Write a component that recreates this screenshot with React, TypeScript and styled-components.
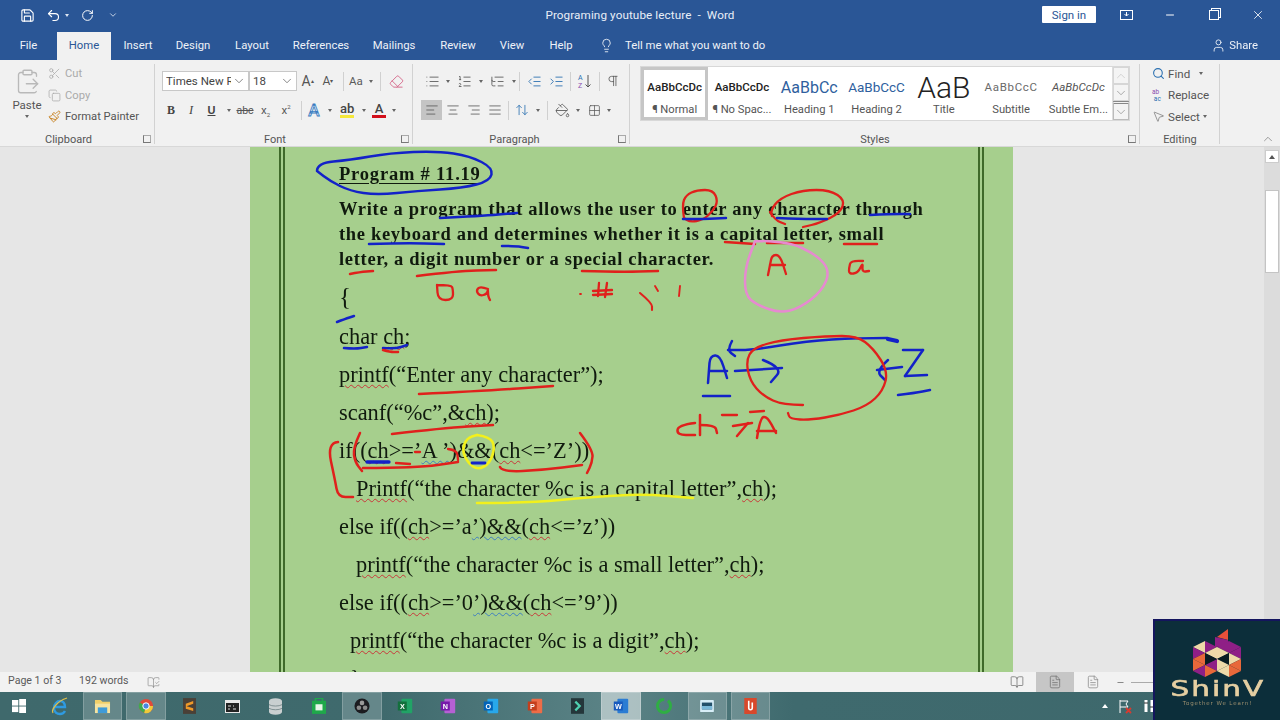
import React from "react";
import styled, { createGlobalStyle } from "styled-components";
import {
  Save, Undo2, RotateCw, Lightbulb, User, Scissors, Copy, Search, MousePointer2, ChevronDown, ChevronUp,
  AlignLeft, AlignCenter, AlignRight, AlignJustify, List, ListOrdered, ListTree, IndentDecrease, IndentIncrease,
  Pilcrow, Minus, X, Eraser, PaintBucket, Grid2x2, ArrowUpDown, BookOpen, FileText, BookOpenCheck, ClipboardPaste,
  Paintbrush,
} from "lucide-react";

const UI = `Roboto, "Liberation Sans", sans-serif`;

const Global = createGlobalStyle`
  html, body { margin: 0; padding: 0; background: #e6e6e6; }
  #root { width: 1280px; height: 720px; overflow: hidden; }
`;

const Screen = styled.div`
  position: relative; width: 1280px; height: 720px; overflow: hidden;
  display: flex; flex-direction: column; font-family: ${UI}; color: #444; filter: blur(0.4px);
`;
const TitleBar = styled.div`
  height: 32px; background: #2a5696; color: #fff; flex: none;
  display: grid; grid-template-columns: 1fr auto 1fr; align-items: center; font-size: 11.7px;
`;
const Qat = styled.div` display: flex; align-items: center; padding: 0 0 2px 15px; `;
const QatSlot = styled.span<{ $w: number }>`
  width: ${p => p.$w}px; display: flex; justify-content: center; align-items: center; flex: none;
`;
const Caret = styled.span<{ $c?: string }>`
  display: inline-block; flex: none; width: 0; height: 0; border-left: 2.5px solid transparent; border-right: 2.5px solid transparent;
  border-top: 3px solid ${p => p.$c || "#666"};
`;
const TitleText = styled.div` letter-spacing: 0.1px; color: #e8eef7; margin-bottom: 2px; white-space: pre; `;
const WinControls = styled.div` display: flex; align-items: center; justify-content: flex-end; margin-bottom: 3px; `;
const SignIn = styled.div`
  width: 54px; height: 17px; background: #fff; color: #2a5696; font-size: 11.5px; display: flex;
  align-items: center; justify-content: center; margin-right: 8px; border-radius: 1px;
`;
const WinBtn = styled.span`
  width: 44px; display: flex; justify-content: center; align-items: center;
`;
const Restore = styled.span`
  width: 8px; height: 8px; border: 1px solid #fff; position: relative;
  box-shadow: 2px -2px 0 -1px #2a5696, 2px -2px 0 0 #fff;
`;
const TabBar = styled.div`
  height: 28px; background: #2a5696; display: flex; align-items: stretch; flex: none; color: #eef2f8; font-size: 11.3px;
`;
const Tab = styled.div<{ $active?: boolean; $w: number }>`
  width: ${p => p.$w}px; display: flex; align-items: center; justify-content: center; flex: none; padding-bottom: 2px; box-sizing: border-box;
  background: ${p => (p.$active ? "#f1f1f1" : "transparent")};
  color: ${p => (p.$active ? "#2a5696" : "inherit")};
`;
const TellMe = styled.div` display: flex; align-items: center; gap: 11px; margin-left: 14px; padding-bottom: 2px; `;
const Share = styled.div` margin-left: auto; display: flex; align-items: center; gap: 3px; padding: 0 22px 2px 0; `;

const Ribbon = styled.div`
  height: 82px; flex: none; background: #f1f1f1; border-bottom: 1px solid #d8d8d8; display: flex; position: relative;
  padding-top: 4px; box-sizing: content-box; font-size: 11.5px;
`;
const Group = styled.div<{ $w: number }>`
  width: ${p => p.$w}px; height: 80px; flex: none; display: flex; flex-direction: column; box-sizing: border-box;
  border-right: 1px solid #d2d2d2;
`;
const GroupBody = styled.div`
  flex: 1; min-height: 0; padding: 7px 0 0 0; display: flex; flex-direction: column; gap: 9px;
`;
const GroupLabel = styled.div`
  height: 14px; margin-top: auto; flex: none; display: grid; grid-template-columns: 1fr auto 1fr; align-items: center; font-size: 11px; color: #555;
  padding: 4px 3px 0 0; box-sizing: content-box; margin-bottom: -2px;
`;
const Launcher = styled.span`
  grid-column: 3; justify-self: end; width: 6px; height: 6px; border-left: 1px solid #777; border-bottom: 1px solid #777; border-top: 1px solid #aaa; border-right: 1px solid #aaa;
`;
const LabelText = styled.span<{ $mr?: number; $ml?: number }>`
  grid-column: 2; margin-right: ${p => p.$mr ?? 14}px; margin-left: ${p => p.$ml ?? 0}px;
`;
const Row = styled.div<{ $left?: number }>`
  display: flex; align-items: center; height: 20px; padding-left: ${p => p.$left || 0}px;
`;
const Slot = styled.span<{ $w: number; $active?: boolean }>`
  width: ${p => p.$w}px; height: 20px; flex: none; display: flex; align-items: center; justify-content: center; color: #5a5a5a;
  background: ${p => (p.$active ? "#c4c4c4" : "transparent")}; font-size: 11.5px;
  & > svg { flex: none; }
`;
const Sep = styled.span` width: 1px; height: 19px; background: #d0d0d0; flex: none; `;
const Combo = styled.div<{ $w: number }>`
  width: ${p => p.$w}px; height: 20px; box-sizing: border-box; background: #fff; border: 1px solid #c8c8c8; flex: none;
  display: flex; align-items: center; justify-content: space-between; padding: 0 2px 0 3px; font-size: 11.5px; color: #444; overflow: hidden;
`;
const ComboText = styled.span<{ $w: number }>` width: ${p => p.$w}px; overflow: hidden; white-space: nowrap; `;
const BigA = styled.span<{ $s: number }>` font-size: ${p => p.$s}px; color: #555; line-height: 1; `;
const OutlineA = styled.span`
  font-size: 17px; line-height: 1; color: #dce9f6; font-weight: 500; -webkit-text-stroke: 0.8px #3a7cc0;
`;
const Sup = styled.sup` font-size: 6px; color: #555; line-height: 0; `;
const Sub = styled.sub` font-size: 6px; color: #555; line-height: 0; `;
const Bold = styled.b` font-family: "Liberation Serif", serif; font-size: 12px; color: #444; `;
const Ital = styled.i` font-family: "Liberation Serif", serif; font-size: 12.5px; color: #444; `;
const Under = styled.u` font-family: "Liberation Sans", sans-serif; font-size: 11px; font-weight: bold; color: #444; `;
const Strike = styled.s` font-size: 10.5px; color: #555; `;
const ColorA = styled.span<{ $bar: string }>`
  font-size: 13px; font-weight: 500; line-height: 13px; color: #444; border-bottom: 3px solid ${p => p.$bar}; width: 14px; text-align: center;
`;
const Clip = styled.div` display: flex; flex: 1; min-height: 0; `;
const PasteCol = styled.div`
  width: 48px; flex: none; padding: 4px 0 0 6px; display: flex; flex-direction: column; align-items: center; font-size: 11.5px; color: #555; gap: 3px; box-sizing: border-box;
`;
const ClipList = styled.div` display: flex; flex-direction: column; margin-top: -1px; `;
const ClipRow = styled.div<{ $muted?: boolean }>`
  height: 21.5px; display: flex; align-items: center; gap: 4px; white-space: nowrap; color: ${p => (p.$muted ? "#aaa" : "#555")}; font-size: 11.2px;
`;
const Gallery = styled.div`
  margin: 2px 0 0 10px; width: 490px; height: 55px; box-sizing: border-box; background: #fff; border: 1px solid #d8d8d8; display: flex; flex: none;
`;
const StyleItem = styled.div<{ $on?: boolean }>`
  width: 67.3px; flex: none; box-sizing: border-box; border: 3px solid ${p => (p.$on ? "#c6c6c6" : "transparent")};
  display: flex; flex-direction: column; align-items: center; overflow: hidden; white-space: nowrap;
`;
const Sample = styled.div<{ $s: number; $c?: string; $i?: boolean; $ls?: number; $w?: number }>`
  height: 30px; width: 61px; display: flex; align-items: center; justify-content: center; overflow: hidden; flex: none;
  font-size: ${p => p.$s}px; color: ${p => p.$c || "#222"}; font-style: ${p => (p.$i ? "italic" : "normal")};
  letter-spacing: ${p => p.$ls || 0}px; font-weight: ${p => p.$w || 400}; padding-top: 4px; box-sizing: border-box;
`;
const StyleName = styled.div` font-size: 11.2px; color: #555; height: 16px; line-height: 16px; margin-top: 2px; `;
const GalleryBtns = styled.div` width: 16px; flex: none; margin-left: auto; display: flex; flex-direction: column; border-left: 1px solid #ddd; background: #f4f4f4; `;
const GalleryBtn = styled.div<{ $bar?: boolean }>`
  flex: 1; border: 1px solid ${p => (p.$bar ? "#bbb" : "#d6d6d6")}; box-sizing: border-box; display: flex; align-items: center; justify-content: center; color: #8a8a8a;
  border-top: ${p => (p.$bar ? "3px double #888" : "1px solid #d6d6d6")};
`;
const EditList = styled.div` display: flex; flex-direction: column; padding-left: 12px; margin-top: -1px; `;
const EditRow = styled.div`
  height: 21.5px; display: flex; align-items: center; gap: 3px; color: #555; white-space: nowrap; font-size: 11.6px;
`;
const Collapse = styled.span` position: absolute; right: 5px; bottom: 0px; color: #777; display: flex; `;

const Main = styled.div` flex: 1; min-height: 0; display: flex; background: #e6e6e6; `;
const Page = styled.div`
  margin-left: 250px; width: 763px; flex: none; background: #a6cf8d; padding: 0 29px; box-sizing: border-box; overflow: hidden;
`;
const Frame = styled.div`
  height: 100%; box-sizing: border-box; border-left: 6px double #3f6a2a; border-right: 6px double #3f6a2a;
  padding: 12px 0 0 54px; font-family: "Liberation Serif", serif; color: #101a0e; overflow: hidden;
`;
const Heading = styled.div`
  height: 30px; line-height: 30px; font-weight: bold; font-size: 18.5px; letter-spacing: 0.8px; text-decoration: underline; text-underline-offset: 3px; white-space: nowrap;
`;
const Para = styled.div`
  margin-top: 8px; width: 600px; font-weight: bold; font-size: 18.5px; line-height: 25px; letter-spacing: 0.68px;
`;
const ParaLine = styled.div` white-space: nowrap; height: 25px; `;
const Brace = styled.div` margin-top: 6px; height: 38px; line-height: 38px; font-size: 25px; `;
const Code = styled.div<{ $indent?: number; $first?: boolean }>`
  height: 38px; line-height: 38px; font-size: 22.4px; white-space: nowrap; padding-left: ${p => p.$indent || 0}px;
  margin-top: ${p => (p.$first ? 2 : 0)}px;
`;
const Sq = styled.span<{ $blue?: boolean }>`
  text-decoration: underline wavy ${p => (p.$blue ? "#3f7fc0" : "#c8383a")} 1px; text-underline-offset: 2px;
`;
const Scrollbar = styled.div`
  width: 16px; margin-left: auto; background: #dcdcdc; flex: none; display: flex; flex-direction: column; align-items: center; padding-top: 3px; box-sizing: border-box;
`;
const ScrollUp = styled.div`
  width: 14px; height: 13px; background: #fff; border: 1px solid #ccc; box-sizing: border-box; display: flex; align-items: center; justify-content: center;
`;
const UpTri = styled.span<{ $c?: string }>` width: 0; height: 0; border-left: 3.5px solid transparent; border-right: 3.5px solid transparent; border-bottom: 4px solid ${p => p.$c || "#555"}; `;
const Thumb = styled.div` width: 14px; height: 83px; margin-top: 27px; background: #fff; border: 1px solid #c4c4c4; box-sizing: border-box; `;
const Status = styled.div`
  height: 20px; flex: none; background: #f2f2f2; display: flex; align-items: center; font-size: 10.6px; color: #5a5a5a; padding-left: 8px;
`;
const StatusText = styled.span<{ $w: number }>` width: ${p => p.$w}px; flex: none; margin-bottom: 3px; `;
const ViewBtns = styled.div` margin-left: auto; display: flex; align-items: center; height: 100%; padding-right: 127px; `;
const ViewBtn = styled.span<{ $on?: boolean }>`
  width: 38px; height: 100%; display: flex; align-items: center; justify-content: center; background: ${p => (p.$on ? "#c6c6c6" : "transparent")}; color: #707070; flex: none;
`;
const ZoomLine = styled.span` flex: 1; height: 1px; background: #aaa; `;
const Zoomer = styled.div` display: flex; align-items: center; gap: 6px; width: 41px; padding-left: 4px; box-sizing: border-box; flex: none; color: #666; `;
const Taskbar = styled.div`
  height: 28px; flex: none; display: flex; align-items: stretch; position: relative; overflow: hidden;
  background: linear-gradient(90deg, #3f696c 0%, #3f6a6d 30%, #5b8386 48%, #3f6a6e 62%, #3e686c 100%);
`;
const StartSlot = styled.div` width: 38px; flex: none; display: flex; align-items: center; justify-content: center; `;
const TaskSlot = styled.div` width: 43.2px; flex: none; padding: 0 2px; box-sizing: border-box; display: flex; `;
const TaskBox = styled.div<{ $state?: "open" | "on" }>`
  flex: 1; display: flex; align-items: center; justify-content: center; box-sizing: border-box;
  background: ${p => (p.$state === "on" ? "rgba(255,255,255,.5)" : p.$state === "open" ? "rgba(255,255,255,.2)" : "transparent")};
  border: 1px solid ${p => (p.$state ? "rgba(255,255,255,.2)" : "transparent")};
`;
const Tray = styled.div` margin-left: auto; padding-right: 125px; display: flex; align-items: center; gap: 11px; color: #fff; `;

const Ink = styled.svg` position: absolute; left: 0; top: 0; width: 1280px; height: 720px; pointer-events: none; `;

const Logo = styled.div`
  position: absolute; left: 1153px; top: 619px; width: 127px; height: 101px; box-sizing: border-box; background: #0c2e3a; border: 2px solid #14155e; border-right: 0; border-bottom: 0;
  display: flex; flex-direction: column; align-items: center; padding-top: 3px;
`;
const LogoMark = styled.svg` width: 60px; height: 55px; flex: none; display: block; margin-right: 1px; `;
const LogoName = styled.div`
  font-family: "DejaVu Sans", sans-serif; font-size: 21px; line-height: 20px; letter-spacing: 1.5px; color: #e6cfa2; transform: scaleX(1.4); -webkit-text-stroke: 0.6px #e6cfa2;
`;
const LogoTag = styled.div`
  font-family: "DejaVu Sans", sans-serif; font-size: 5.5px; line-height: 8px; letter-spacing: 0.9px; color: #9c8f6e; white-space: nowrap;
`;

type Stroke = { c: string; w: number; p: number[][] };
const R = "#e0201c", B = "#1322c8", P = "#e68ad0", Y = "#f2f01c";
const strokes: Stroke[] = [
  { c: B, w: 2.2, p: [[317,171],[317,163],[350,160],[390,153],[437,151],[470,156],[493,168],[490,181],[463,188],[417,191],[377,195],[350,191],[330,181],[317,171]] },
  { c: B, w: 2.2, p: [[440,218],[480,216],[517,213]] },
  { c: B, w: 2.2, p: [[369,244],[405,243],[444,244]] },
  { c: B, w: 2.2, p: [[502,246],[515,246],[528,248]] },
  { c: R, w: 2.2, p: [[350,274],[360,272],[373,271]] },
  { c: R, w: 2.2, p: [[417,276],[457,271],[496,270]] },
  { c: R, w: 2.2, p: [[582,271],[620,272],[658,271]] },
  { c: R, w: 2, p: [[437,285],[451,285],[453,289],[453,300],[438,300],[437,285]] },
  { c: R, w: 2, p: [[488,289],[480,286],[476,291],[480,296],[487,294],[488,289],[488,296],[490,300]] },
  { c: R, w: 1.5, p: [[580,294],[581,294]] },
  { c: R, w: 2, p: [[593,291],[612,290]] },
  { c: R, w: 2, p: [[593,295],[612,294]] },
  { c: R, w: 2, p: [[599,283],[598,296]] },
  { c: R, w: 2, p: [[607,283],[605,297]] },
  { c: R, w: 1.8, p: [[640,293],[652,303],[652,310]] },
  { c: R, w: 1.6, p: [[655,286],[658,291]] },
  { c: R, w: 1.6, p: [[680,286],[679,296]] },
  { c: B, w: 2.2, p: [[337,322],[345,319],[354,316]] },
  { c: B, w: 2.2, p: [[344,348],[355,349],[367,347]] },
  { c: B, w: 2.2, p: [[383,348],[395,349],[407,345]] },
  { c: R, w: 2.2, p: [[383,350],[390,352],[398,352]] },
  { c: R, w: 2.2, p: [[419,394],[483,391],[553,386]] },
  { c: R, w: 2, p: [[684,218],[682,205],[686,195],[697,190],[713,190],[718,201],[713,211],[703,220],[690,222],[684,218]] },
  { c: B, w: 2.2, p: [[683,219],[705,219],[726,218]] },
  { c: R, w: 2, p: [[772,216],[770,211],[780,198],[803,190],[830,190],[845,200],[840,213],[820,223],[803,227]] },
  { c: R, w: 2, p: [[770,212],[775,220],[785,224]] },
  { c: B, w: 2.2, p: [[777,218],[800,219],[827,219]] },
  { c: B, w: 2.2, p: [[870,215],[890,214],[910,214]] },
  { c: R, w: 2.2, p: [[725,242],[740,243],[755,244]] },
  { c: R, w: 2.2, p: [[767,243],[785,243],[803,243]] },
  { c: R, w: 2.2, p: [[844,244],[860,244],[877,244]] },
  { c: P, w: 2.2, p: [[755,241],[787,241],[817,255],[830,271],[822,291],[800,308],[780,313],[757,305],[745,295],[745,268],[755,241]] },
  { c: R, w: 2, p: [[768,275],[770,265],[772,255],[780,255],[786,274]] },
  { c: R, w: 2, p: [[770,265],[785,265]] },
  { c: R, w: 2, p: [[863,261],[851,260],[849,268],[849,274],[858,273],[863,262],[862,272],[869,271]] },
  { c: B, w: 2.2, p: [[887,338],[857,338],[807,341],[753,350],[728,350]] },
  { c: B, w: 2.2, p: [[732,341],[727,350],[735,356]] },
  { c: B, w: 4, p: [[888,339],[897,341]] },
  { c: B, w: 2.2, p: [[708,383],[709,370],[710,356],[720,355],[727,378]] },
  { c: B, w: 2.2, p: [[710,371],[727,371]] },
  { c: B, w: 2.2, p: [[703,396],[730,396]] },
  { c: B, w: 2.2, p: [[735,371],[782,368]] },
  { c: B, w: 2.2, p: [[763,360],[783,368],[771,382]] },
  { c: B, w: 2.2, p: [[903,350],[923,350]] },
  { c: B, w: 2.2, p: [[923,350],[905,376]] },
  { c: B, w: 2.2, p: [[905,376],[927,375]] },
  { c: B, w: 2.2, p: [[902,367],[877,370]] },
  { c: B, w: 2.2, p: [[888,360],[876,371],[885,380]] },
  { c: B, w: 2.2, p: [[898,395],[915,393],[930,390]] },
  { c: R, w: 2, p: [[803,405],[783,405],[763,396],[750,381],[746,361],[753,348],[780,340],[827,336],[857,336],[873,348],[888,371],[883,391],[867,406],[840,415],[810,420],[790,419],[788,413]] },
  { c: R, w: 2.2, p: [[695,423],[678,425],[677,435],[695,435]] },
  { c: R, w: 2.2, p: [[700,415],[700,435]] },
  { c: R, w: 2.2, p: [[700,425],[715,425],[717,433]] },
  { c: R, w: 2, p: [[722,415],[737,415]] },
  { c: R, w: 2, p: [[750,412],[764,411]] },
  { c: R, w: 2.2, p: [[733,426],[752,423]] },
  { c: R, w: 2.2, p: [[748,423],[737,436]] },
  { c: R, w: 2.2, p: [[757,438],[760,418],[767,416],[776,433]] },
  { c: R, w: 2.2, p: [[757,431],[776,431]] },
  { c: R, w: 2.2, p: [[338,442],[327,443],[335,480],[338,497],[353,497]] },
  { c: R, w: 2.2, p: [[360,433],[353,448],[355,462],[362,471]] },
  { c: R, w: 2.2, p: [[392,434],[443,428],[493,425]] },
  { c: B, w: 3, p: [[367,462],[389,462]] },
  { c: R, w: 2, p: [[396,463],[410,464]] },
  { c: R, w: 2.2, p: [[363,468],[417,468],[458,462]] },
  { c: R, w: 2, p: [[415,452],[420,452]] },
  { c: R, w: 2, p: [[448,449],[457,450],[458,460]] },
  { c: Y, w: 2.4, p: [[477,435],[490,437],[495,447],[490,463],[478,470],[468,463],[462,450],[467,438],[477,435]] },
  { c: B, w: 2.5, p: [[472,463],[485,463]] },
  { c: R, w: 2.2, p: [[500,467],[502,472],[543,470],[582,465]] },
  { c: R, w: 2.2, p: [[580,433],[593,450],[592,463],[587,473]] },
  { c: Y, w: 2.2, p: [[477,503],[527,503],[593,497],[643,494],[693,498]] },
];

const smooth = (p: number[][]) => {
  if (p.length < 3) return `M${p[0][0]} ${p[0][1]} L${p[p.length - 1][0]} ${p[p.length - 1][1]}`;
  let d = `M${p[0][0]} ${p[0][1]}`;
  for (let i = 1; i < p.length - 1; i++) {
    const mx = (p[i][0] + p[i + 1][0]) / 2, my = (p[i][1] + p[i + 1][1]) / 2;
    d += ` Q${p[i][0]} ${p[i][1]} ${mx} ${my}`;
  }
  const l = p[p.length - 1];
  return d + ` L${l[0]} ${l[1]}`;
};

const Cr = "#eed9a8", Or = "#e8683a", Pu = "#8f1f86";
const tris: [string, string][] = [
  ["66,17 77,9 77,20", "#e8503a"],
  ["64,17 77,20 77,26 64,27", Pu],
  ["42,27 54,21 54,33", Cr], ["54,21 66,27 54,33", Pu], ["66,27 78,21 78,33", Pu], ["78,21 90,27 78,33", Pu],
  ["42,27 54,33 42,39", Pu], ["54,33 66,27 66,39", Cr], ["66,27 78,33 66,39", Cr], ["78,33 90,27 90,39", Pu],
  ["42,39 54,33 54,45", Or], ["66,39 78,33 78,45", "#0a1c22"], ["78,33 90,39 78,45", Cr],
  ["42,39 54,45 42,51", Or], ["54,45 66,39 66,51", Pu], ["66,39 78,45 66,51", Cr], ["78,45 90,39 90,51", Or],
  ["42,51 54,45 54,57", Pu], ["54,45 66,51 54,57", Or], ["66,51 78,45 78,57", Cr], ["78,45 90,51 78,57", Or],
  ["54,33 66,39 54,45", "#0a1c22"],
];

const Office = ({ c, c2, l }: { c: string; c2: string; l: string }) => (
  <svg width="18" height="18" viewBox="0 0 20 20">
    <rect x="6" y="2" width="12" height="16" rx="1" fill={c2} />
    <rect x="2" y="5" width="10" height="10" fill={c} />
    <text x="7" y="13" fontSize="8" fontWeight="700" fill="#fff" textAnchor="middle" fontFamily="Liberation Sans, sans-serif">{l}</text>
  </svg>
);

export default function App() {
  const ic = { strokeWidth: 1.4 };
  return (
    <>
      <Global />
      <Screen>
        <TitleBar>
          <Qat>
            <QatSlot $w={24}><Save size={15} color="#fff" strokeWidth={1.8} /></QatSlot>
            <QatSlot $w={3} />
            <QatSlot $w={22}><Undo2 size={15} color="#fff" strokeWidth={1.8} /></QatSlot>
            <QatSlot $w={6}><Caret $c="#dde6f2" /></QatSlot>
            <QatSlot $w={34}><RotateCw size={13} color="#fff" strokeWidth={1.8} /></QatSlot>
            <QatSlot $w={18}><ChevronDown size={10} color="#dde6f2" /></QatSlot>
          </Qat>
          <TitleText>Programing youtube lecture  -  Word</TitleText>
          <WinControls>
            <SignIn>Sign in</SignIn>
            <WinBtn><svg width="13" height="10" viewBox="0 0 13 10"><rect x=".5" y=".5" width="12" height="9" fill="none" stroke="#fff" /><path d="M6.500 2v4M4.500 4l2 2 2-2" stroke="#fff" fill="none" /></svg></WinBtn>
            <WinBtn><Minus size={12} color="#fff" /></WinBtn>
            <WinBtn><Restore /></WinBtn>
            <WinBtn><X size={14} color="#fff" strokeWidth={1.4} /></WinBtn>
          </WinControls>
        </TitleBar>
        <TabBar>
          <Tab $w={57}>File</Tab>
          <Tab $w={54} $active>Home</Tab>
          <Tab $w={54}>Insert</Tab>
          <Tab $w={56}>Design</Tab>
          <Tab $w={62}>Layout</Tab>
          <Tab $w={76}>References</Tab>
          <Tab $w={70}>Mailings</Tab>
          <Tab $w={58}>Review</Tab>
          <Tab $w={50}>View</Tab>
          <Tab $w={48}>Help</Tab>
          <TellMe><Lightbulb size={15} color="#eef2f8" strokeWidth={1.4} />Tell me what you want to do</TellMe>
          <Share><User size={15} color="#eef2f8" strokeWidth={1.4} />Share</Share>
        </TabBar>
        <Ribbon>
          <Group $w={155}>
            <Clip>
              <PasteCol>
                <ClipboardPaste size={27} color="#b9b9b9" strokeWidth={1.2} />
                <span>Paste</span>
                <Caret />
              </PasteCol>
              <ClipList>
                <ClipRow $muted><Scissors size={13} {...ic} />Cut</ClipRow>
                <ClipRow $muted><Copy size={13} {...ic} />Copy</ClipRow>
                <ClipRow><Paintbrush size={13} color="#c8872c" strokeWidth={1.8} />Format Painter</ClipRow>
              </ClipList>
            </Clip>
            <GroupLabel><LabelText>Clipboard</LabelText><Launcher /></GroupLabel>
          </Group>
          <Group $w={258}>
            <GroupBody>
              <Row $left={7}>
                <Combo $w={87}><ComboText $w={65}>Times New Roman</ComboText><ChevronDown size={14} color="#555" strokeWidth={1.2} /></Combo>
                <Combo $w={48}><span>18</span><ChevronDown size={14} color="#555" strokeWidth={1.2} /></Combo>
                <Slot $w={21}><BigA $s={14}>A</BigA><Sup>▴</Sup></Slot>
                <Slot $w={20}><BigA $s={12}>A</BigA><Sup>▾</Sup></Slot>
                <Slot $w={5} />
                <Sep />
                <Slot $w={24}>Aa</Slot>
                <Slot $w={6}><Caret /></Slot>
                <Slot $w={6} />
                <Sep />
                <Slot $w={30}><Eraser size={15} color="#d4688a" strokeWidth={1.5} /></Slot>
              </Row>
              <Row $left={6}>
                <Slot $w={20}><Bold>B</Bold></Slot>
                <Slot $w={20}><Ital>I</Ital></Slot>
                <Slot $w={21}><Under>U</Under></Slot>
                <Slot $w={13}><Caret /></Slot>
                <Slot $w={20}><Strike>abc</Strike></Slot>
                <Slot $w={21}><span>x<Sub>2</Sub></span></Slot>
                <Slot $w={20}><span>x<Sup>2</Sup></span></Slot>
                <Slot $w={5} />
                <Sep />
                <Slot $w={24}><OutlineA>A</OutlineA></Slot>
                <Slot $w={8}><Caret /></Slot>
                <Slot $w={26}><ColorA $bar="#f5e83a">ab</ColorA></Slot>
                <Slot $w={8}><Caret /></Slot>
                <Slot $w={22}><ColorA $bar="#d2101c">A</ColorA></Slot>
                <Slot $w={8}><Caret /></Slot>
              </Row>
            </GroupBody>
            <GroupLabel><LabelText>Font</LabelText><Launcher /></GroupLabel>
          </Group>
          <Group $w={217}>
            <GroupBody>
              <Row $left={9}>
                <Slot $w={20}><List size={15} {...ic} /></Slot>
                <Slot $w={12}><Caret /></Slot>
                <Slot $w={21}><ListOrdered size={15} {...ic} /></Slot>
                <Slot $w={12}><Caret /></Slot>
                <Slot $w={21}><ListTree size={15} {...ic} /></Slot>
                <Slot $w={11}><Caret /></Slot>
                <Sep />
                <Slot $w={29}><IndentDecrease size={15} color="#2a6fb0" {...ic} /></Slot>
                <Slot $w={14}><IndentIncrease size={15} color="#2a6fb0" {...ic} /></Slot>
                <Slot $w={7} />
                <Sep />
                <Slot $w={28}><svg width="16" height="16" viewBox="0 0 16 16"><text x="1" y="7" fontSize="7" fill="#2a6fb0" fontFamily="Roboto">A</text><text x="1" y="14.5" fontSize="7" fill="#8a4fb0" fontFamily="Roboto">Z</text><path d="M11 2v12M8.500 11.500L11 14l2.500-2.500" stroke="#555" fill="none" /></svg></Slot>
                <Sep />
                <Slot $w={26}><Pilcrow size={14} {...ic} /></Slot>
              </Row>
              <Row $left={8}>
                <Slot $w={21} $active><AlignLeft size={14} {...ic} /></Slot>
                <Slot $w={21}><AlignCenter size={14} {...ic} /></Slot>
                <Slot $w={21}><AlignRight size={14} {...ic} /></Slot>
                <Slot $w={21}><AlignJustify size={14} {...ic} /></Slot>
                <Slot $w={3} />
                <Sep />
                <Slot $w={26}><ArrowUpDown size={14} color="#2a6fb0" {...ic} /></Slot>
                <Slot $w={6}><Caret /></Slot>
                <Slot $w={6} />
                <Sep />
                <Slot $w={28}><PaintBucket size={15} {...ic} /></Slot>
                <Slot $w={4}><Caret /></Slot>
                <Slot $w={28}><Grid2x2 size={13} {...ic} /></Slot>
                <Slot $w={2}><Caret /></Slot>
              </Row>
            </GroupBody>
            <GroupLabel><LabelText $mr={10}>Paragraph</LabelText><Launcher /></GroupLabel>
          </Group>
          <Group $w={510}>
            <Gallery>
              <StyleItem $on><Sample $s={11.5} $w={500}>AaBbCcDc</Sample><StyleName>¶ Normal</StyleName></StyleItem>
              <StyleItem><Sample $s={11.5} $w={500}>AaBbCcDc</Sample><StyleName>¶ No Spac...</StyleName></StyleItem>
              <StyleItem><Sample $s={16} $c="#2f5f9e">AaBbCc</Sample><StyleName>Heading 1</StyleName></StyleItem>
              <StyleItem><Sample $s={13.5} $c="#2f5f9e">AaBbCcC</Sample><StyleName>Heading 2</StyleName></StyleItem>
              <StyleItem><Sample $s={30} $w={300}>AaB</Sample><StyleName>Title</StyleName></StyleItem>
              <StyleItem><Sample $s={11.5} $c="#6a6a6a" $ls={0.7}>AaBbCcC</Sample><StyleName>Subtitle</StyleName></StyleItem>
              <StyleItem><Sample $s={11.5} $c="#555" $i>AaBbCcDc</Sample><StyleName>Subtle Em...</StyleName></StyleItem>
              <GalleryBtns>
                <GalleryBtn><ChevronUp size={14} color="#c4c4c4" strokeWidth={1.2} /></GalleryBtn>
                <GalleryBtn><ChevronDown size={14} strokeWidth={1.2} /></GalleryBtn>
                <GalleryBtn $bar><ChevronDown size={14} strokeWidth={1.2} /></GalleryBtn>
              </GalleryBtns>
            </Gallery>
            <GroupLabel><LabelText $mr={16}>Styles</LabelText><Launcher /></GroupLabel>
          </Group>
          <Group $w={80}>
            <EditList>
              <EditRow><Search size={13} color="#2a6fb0" strokeWidth={2} />Find&nbsp;&nbsp;<Caret /></EditRow>
              <EditRow><svg width="13" height="14" viewBox="0 0 14 14"><text x="0" y="6" fontSize="7" fill="#8a4fb0" fontFamily="Roboto">ab</text><text x="2" y="13" fontSize="7" fill="#2a6fb0" fontFamily="Roboto">ac</text></svg>Replace</EditRow>
              <EditRow><MousePointer2 size={13} color="#666" strokeWidth={1.2} />Select<Caret /></EditRow>
            </EditList>
            <GroupLabel><LabelText $mr={0} $ml={4}>Editing</LabelText></GroupLabel>
          </Group>
          <Collapse><ChevronUp size={14} strokeWidth={1.2} /></Collapse>
        </Ribbon>
        <Main>
          <Page>
            <Frame>
              <Heading>Program # 11.19</Heading>
              <Para>
                <ParaLine>Write a program that allows the user to enter any character through</ParaLine>
                <ParaLine>the keyboard and determines whether it is a capital letter, small</ParaLine>
                <ParaLine>letter, a digit number or a special character.</ParaLine>
              </Para>
              <Brace>{"{"}</Brace>
              <Code $first>char <Sq>ch</Sq>;</Code>
              <Code><Sq>printf</Sq>(“Enter any character”);</Code>
              <Code>scanf(“%c”,&amp;<Sq>ch</Sq>);</Code>
              <Code>if((<Sq>ch</Sq>&gt;=’<Sq $blue>A ’</Sq>)&amp;&amp;(<Sq>ch</Sq>&lt;=’Z’))</Code>
              <Code $indent={17}><Sq>Printf</Sq>(“the character %c is a capital letter”,<Sq>ch</Sq>);</Code>
              <Code>else if((<Sq>ch</Sq>&gt;=’a<Sq $blue>’)&amp;&amp;</Sq>(<Sq>ch</Sq>&lt;=’z’))</Code>
              <Code $indent={17}><Sq>printf</Sq>(“the character %c is a small letter”,<Sq>ch</Sq>);</Code>
              <Code>else if((<Sq>ch</Sq>&gt;=’0<Sq $blue>’)&amp;&amp;</Sq>(<Sq>ch</Sq>&lt;=’9’))</Code>
              <Code $indent={11}><Sq>printf</Sq>(“the character %c is a digit”,<Sq>ch</Sq>);</Code>
              <Code $indent={11}>{"}"}</Code>
            </Frame>
          </Page>
          <Scrollbar>
            <ScrollUp><UpTri /></ScrollUp>
            <Thumb />
          </Scrollbar>
        </Main>
        <Status>
          <StatusText $w={71}>Page 1 of 3</StatusText>
          <StatusText $w={68}>192 words</StatusText>
          <BookOpenCheck size={13} color="#888" strokeWidth={1.2} />
          <ViewBtns>
            <ViewBtn><BookOpen size={14} strokeWidth={1.3} /></ViewBtn>
            <ViewBtn $on><FileText size={14} strokeWidth={1.3} /></ViewBtn>
            <ViewBtn><FileText size={14} strokeWidth={1.3} color="#8a8a8a" /></ViewBtn>
            <Zoomer><Minus size={9} /><ZoomLine /></Zoomer>
          </ViewBtns>
        </Status>
        <Taskbar>
          <StartSlot><svg width="14" height="14" viewBox="0 0 14 14" fill="#fff"><rect x="0" y="1" width="6.300" height="5.600" /><rect x="7.200" y="0" width="6.800" height="6.600" /><rect x="0" y="7.500" width="6.300" height="5.600" /><rect x="7.200" y="7.500" width="6.800" height="6.500" /></svg></StartSlot>
          <TaskSlot><TaskBox><svg width="20" height="20" viewBox="0 0 20 20"><path d="M4 11h11c0-4-2-6-5-6s-6 3-6 7 3 6 6 6c2 0 4-1 5-3" fill="none" stroke="#2f9ae0" strokeWidth="2.400" /><path d="M3 17c-2-3 4-12 14-15" fill="none" stroke="#e0c04a" strokeWidth="1.200" /></svg></TaskBox></TaskSlot>
          <TaskSlot><TaskBox $state="open"><svg width="17" height="16" viewBox="0 0 18 17"><path d="M1 2h6l2 2h8v3H1z" fill="#f0cf6a" /><rect x="1" y="6" width="16" height="10" fill="#f6e3a0" /><rect x="4" y="10" width="10" height="6" fill="#3f9bd8" /></svg></TaskBox></TaskSlot>
          <TaskSlot><TaskBox $state="open"><svg width="16" height="16" viewBox="0 0 18 18"><circle cx="9" cy="9" r="8" fill="#e04a3a" /><path d="M9 9L2 5a8 8 0 0 0 5 11.800z" fill="#3faa4f" /><path d="M9 9l-2 7.800A8 8 0 0 0 17 9z" fill="#f0c93a" /><circle cx="9" cy="9" r="3.600" fill="#4a86e0" stroke="#fff" strokeWidth="1.100" /></svg></TaskBox></TaskSlot>
          <TaskSlot><TaskBox><svg width="13" height="16" viewBox="0 0 14 17"><rect width="14" height="17" fill="#4a4037" /><path d="M3 6l8-3v3l-8 3zM3 8.500l8 2.500v3l-8-2.500" fill="#f09a28" /></svg></TaskBox></TaskSlot>
          <TaskSlot><TaskBox><svg width="15" height="13" viewBox="0 0 15 13"><rect width="15" height="13" fill="#e8e8e8" /><rect x="1" y="3" width="13" height="9" fill="#222" /><path d="M3 6h3M8 6h1M3 9h2M8 9h3" stroke="#ddd" /></svg></TaskBox></TaskSlot>
          <TaskSlot><TaskBox><svg width="13" height="17" viewBox="0 0 14 18" fill="#c9cfd0"><ellipse cx="7" cy="3" rx="7" ry="3" /><rect y="3" width="14" height="12" /><ellipse cx="7" cy="15" rx="7" ry="3" /><path d="M0 7c3 2 11 2 14 0M0 11c3 2 11 2 14 0" stroke="#7a8a8c" fill="none" /></svg></TaskBox></TaskSlot>
          <TaskSlot><TaskBox><svg width="14" height="16" viewBox="0 0 16 18"><rect y="3" width="16" height="15" fill="#1fa84a" /><rect x="4" y="0" width="8" height="5" fill="none" stroke="#1fa84a" strokeWidth="2" /><rect x="4" y="7" width="8" height="7" fill="#e8f5e8" /></svg></TaskBox></TaskSlot>
          <TaskSlot><TaskBox $state="open"><svg width="16" height="16" viewBox="0 0 18 18"><circle cx="9" cy="9" r="8.500" fill="#1c1c20" /><circle cx="9" cy="5.500" r="2.600" fill="#9a9a9a" /><circle cx="5.500" cy="11" r="2.600" fill="#8a8a8a" /><circle cx="12.500" cy="11" r="2.600" fill="#8a8a8a" /></svg></TaskBox></TaskSlot>
          <TaskSlot><TaskBox><Office c="#13703c" c2="#21a366" l="X" /></TaskBox></TaskSlot>
          <TaskSlot><TaskBox><Office c="#7719aa" c2="#b560d4" l="N" /></TaskBox></TaskSlot>
          <TaskSlot><TaskBox><Office c="#0364b8" c2="#28a8ea" l="O" /></TaskBox></TaskSlot>
          <TaskSlot><TaskBox><Office c="#c43e1c" c2="#ed6c47" l="P" /></TaskBox></TaskSlot>
          <TaskSlot><TaskBox><svg width="13" height="16" viewBox="0 0 15 18"><rect width="15" height="18" fill="#24363a" /><path d="M5 4l5 5-5 5" fill="none" stroke="#4fd0b0" strokeWidth="2.600" /></svg></TaskBox></TaskSlot>
          <TaskSlot><TaskBox $state="on"><Office c="#185abd" c2="#2b7cd3" l="W" /></TaskBox></TaskSlot>
          <TaskSlot><TaskBox><svg width="18" height="18" viewBox="0 0 18 18"><circle cx="9" cy="9" r="6.500" fill="none" stroke="#2fae44" strokeWidth="3" strokeDasharray="30 4" /></svg></TaskBox></TaskSlot>
          <TaskSlot><TaskBox $state="open"><svg width="14" height="12" viewBox="0 0 16 14"><rect width="16" height="14" rx="1" fill="#d8eef8" /><rect x="2" y="3" width="12" height="8" fill="#23506a" /><rect x="2" y="7" width="12" height="4" fill="#7ab8d8" /></svg></TaskBox></TaskSlot>
          <TaskSlot><TaskBox $state="open"><svg width="13" height="16" viewBox="0 0 14 18"><rect width="14" height="18" fill="#d9482b" /><path d="M5 3v8c0 3 4 3 4 0V5" fill="none" stroke="#fff" strokeWidth="1.800" /></svg></TaskBox></TaskSlot>
          <Tray>
            <UpTri $c="#fff" />
            <svg width="13" height="15" viewBox="0 0 13 15"><path d="M1 1v13M1 2h8l-2 3 2 3H1" fill="none" stroke="#fff" /><path d="M7 9l5 5M12 9l-5 5" stroke="#d83a30" strokeWidth="1.800" /></svg>
            <svg width="12" height="16" viewBox="0 0 12 16"><path d="M3 2v12M9 2v12" stroke="#fff" strokeWidth="3" /><path d="M1 5h4M7 9h4" stroke="#333" /></svg>
          </Tray>
        </Taskbar>
        <Ink viewBox="0 0 1280 720">
          {strokes.map((s, i) => (
            <path key={i} d={smooth(s.p)} fill="none" stroke={s.c} strokeWidth={s.w + 0.3} strokeLinecap="round" strokeLinejoin="round" />
          ))}
        </Ink>
        <Logo>
          <LogoMark viewBox="36 4 60 55">
            {tris.map(([pts, f], i) => <polygon key={i} points={pts} fill={f} />)}
          </LogoMark>
          <LogoName>ShinV</LogoName>
          <LogoTag>Together We Learn!</LogoTag>
        </Logo>
      </Screen>
    </>
  );
}
